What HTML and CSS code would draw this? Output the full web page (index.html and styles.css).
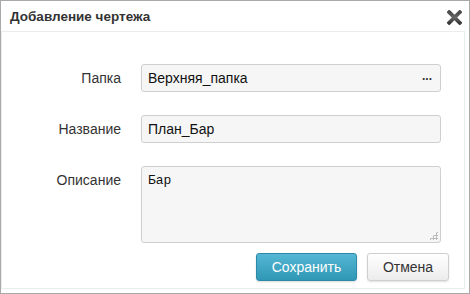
FILE: index.html
```html
<!DOCTYPE html>
<html lang="ru">
<head>
<meta charset="utf-8">
<title>Добавление чертежа</title>
<link rel="stylesheet" href="styles.css">
</head>
<body>
<div class="dialog">
  <div class="titlebar">
    <span class="title">Добавление чертежа</span>
    <svg class="close" width="15" height="15" viewBox="0 0 15 15" aria-label="Закрыть">
      <defs>
        <linearGradient id="xg" x1="0" y1="0" x2="0" y2="1">
          <stop offset="0" stop-color="#4a4a4a"/>
          <stop offset="0.5" stop-color="#666"/>
          <stop offset="1" stop-color="#3a3a3a"/>
        </linearGradient>
      </defs>
      <path d="M2.2 2.2 L12.8 12.8 M12.8 2.2 L2.2 12.8" stroke="url(#xg)" stroke-width="3.8" stroke-linecap="square"/>
    </svg>
  </div>
  <div class="body">
    <form class="form">
      <label class="label">Папка</label>
      <div class="input picker"><span>Верхняя_папка</span><span class="dots">...</span></div>
      <label class="label">Название</label>
      <div class="input">План_Бар</div>
      <label class="label label-top">Описание</label>
      <div class="textarea">Бар<span class="grip"></span></div>
    </form>
    <div class="actions">
      <button class="btn btn-primary" type="button">Сохранить</button>
      <button class="btn btn-default" type="button">Отмена</button>
    </div>
  </div>
</div>
</body>
</html>
```

FILE: styles.css
```css
* { box-sizing: border-box; }
html, body { margin: 0; padding: 0; background: #fff; }
body { font-family: Arial, "Liberation Sans", sans-serif; font-size: 13px; color: #333; }

.dialog {
  width: 470px;
  height: 294px;
  border: 1px solid #a9a9a9;
  background: #fff;
  display: flex;
  flex-direction: column;
}

.titlebar {
  height: 30px;
  flex: none;
  display: flex;
  align-items: center;
  justify-content: space-between;
  padding: 0 7px 0 9px;
}
.title { font-weight: bold; font-size: 13.5px; color: #333; }
.close { display: block; margin-top: 2px; }

.body {
  flex: 1;
  border: 1px solid #ececec;
  margin: 0 4px 4px 0;
  display: flex;
  flex-direction: column;
}

.form {
  display: grid;
  grid-template-columns: 119px 300px;
  column-gap: 20px;
  row-gap: 23px;
  margin-top: 32px;
  align-items: center;
}
.label { text-align: right; font-size: 14px; color: #333; }
.label-top { align-self: start; padding-top: 6px; }

.input {
  height: 28px;
  border: 1px solid #cfcfcf;
  border-radius: 3px;
  background: #f6f6f6;
  padding: 0 6px;
  display: flex;
  align-items: center;
  font-size: 14px;
  color: #111;
}
.picker { justify-content: space-between; }
.dots { font-weight: bold; font-size: 12px; color: #333; padding-bottom: 4px; margin-right: 2px; }

.textarea {
  position: relative;
  height: 77px;
  border: 1px solid #cfcfcf;
  border-radius: 3px;
  background: #f6f6f6;
  padding: 6px 6px;
  font-family: "Liberation Mono", "Courier New", monospace;
  font-size: 13px;
  color: #111;
}
.grip {
  position: absolute;
  right: 2px;
  bottom: 2px;
  width: 9px;
  height: 9px;
  background:
    radial-gradient(circle, #bbb 0 1px, transparent 1.2px) 0 0 / 3px 3px;
  clip-path: polygon(100% 0, 100% 100%, 0 100%);
}

.actions {
  display: flex;
  justify-content: flex-end;
  gap: 10px;
  margin-top: 10px;
  margin-right: 15px;
}
.btn {
  height: 28px;
  border-radius: 3px;
  font-family: Arial, "Liberation Sans", sans-serif;
  font-size: 14px;
  padding: 0;
  cursor: pointer;
}
.btn-primary {
  width: 101px;
  color: #fff;
  border: 1px solid #2a8aa8;
  background: linear-gradient(#55b7d4, #2f97b5);
  box-shadow: 0 1px 2px rgba(0,0,0,0.15);
}
.btn-default {
  width: 82px;
  color: #333;
  border: 1px solid #cfcfcf;
  background: linear-gradient(#ffffff, #ececec);
  box-shadow: 0 1px 2px rgba(0,0,0,0.12);
}
```
